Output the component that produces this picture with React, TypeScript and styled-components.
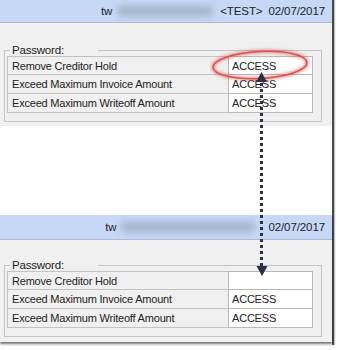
import React from "react";
import styled, { createGlobalStyle } from "styled-components";

const Global = createGlobalStyle`
  html, body { margin: 0; padding: 0; background: #fff; }
  body { font-family: "Liberation Sans", Arial, sans-serif; }
`;

const Page = styled.div`
  position: relative;
  width: 337px;
  height: 350px;
  background: #fff;
  overflow: hidden;
`;

const Frame = styled.div`
  width: 332px;
  height: 345px;
  border-right: 2px solid #4a4a4a;
  box-shadow: 1px 0 1px rgba(0, 0, 0, 0.25);
  display: flex;
  flex-direction: column;
`;

const Panel = styled.section<{ $shadow?: boolean }>`
  background: #f0f0f0;
  display: flex;
  flex-direction: column;
  box-shadow: ${(p) => (p.$shadow ? "0 2px 2px rgba(0,0,0,0.55)" : "none")};
`;

const Gap = styled.div`
  height: 89px;
  background: #fff;
`;

const Header = styled.header<{ $h: number }>`
  height: ${(p) => p.$h}px;
  background: #c6d8f6;
  display: flex;
  align-items: center;
  justify-content: flex-end;
  padding-right: 7px;
  font-size: 11.5px;
  letter-spacing: -0.1px;
  color: #222;
  border-bottom: 1px solid #aebcd2;
`;

const HeaderText = styled.span<{ $ml?: number }>`
  margin-left: ${(p) => p.$ml ?? 0}px;
  white-space: nowrap;
`;

const Blur = styled.span<{ $w: number }>`
  display: inline-block;
  width: ${(p) => p.$w}px;
  height: 12px;
  margin-left: 5px;
  background: #a9b8d0;
  border-radius: 4px;
  filter: blur(3px);
`;

const Body = styled.div<{ $top: number; $bottom: number }>`
  padding: ${(p) => p.$top}px 10px ${(p) => p.$bottom}px 4px;
`;

const Group = styled.fieldset`
  margin: 0;
  padding: 0 8px 8px 2px;
  border: 1px solid #c4c4c4;
  border-radius: 0;
  min-width: 0;
`;

const Legend = styled.legend`
  font-size: 11.5px;
  letter-spacing: -0.2px;
  color: #222;
  padding: 0 34px 0 2px;
  margin-left: 3px;
  line-height: 14px;
`;

const Grid = styled.div`
  display: grid;
  grid-template-columns: 221px 85px;
  grid-auto-rows: 19px;
  margin-top: -1px;
  font-size: 11px;
  letter-spacing: -0.2px;
  color: #222;
`;

const Label = styled.div`
  border: 1px solid #c2c2c2;
  border-right: none;
  border-top: none;
  background: #f0f0f0;
  padding-left: 4px;
  display: flex;
  align-items: center;
  &:nth-child(1) { border-top: 1px solid #c2c2c2; }
`;

const Value = styled.div`
  border: 1px solid #b8b8b8;
  border-top: none;
  background: #fff;
  padding-left: 3px;
  display: flex;
  align-items: center;
  &:nth-child(2) { border-top: 1px solid #b8b8b8; }
`;

const Overlay = styled.svg`
  position: absolute;
  left: 0;
  top: 0;
  pointer-events: none;
`;

type Row = { label: string; value: string };

const PasswordGroup: React.FC<{ rows: Row[] }> = ({ rows }) => (
  <Group>
    <Legend>Password:</Legend>
    <Grid>
      {rows.map((r) => (
        <React.Fragment key={r.label}>
          <Label>{r.label}</Label>
          <Value>{r.value}</Value>
        </React.Fragment>
      ))}
    </Grid>
  </Group>
);

const before: Row[] = [
  { label: "Remove Creditor Hold", value: "ACCESS" },
  { label: "Exceed Maximum Invoice Amount", value: "ACCESS" },
  { label: "Exceed Maximum Writeoff Amount", value: "ACCESS" },
];
const after: Row[] = [
  { label: "Remove Creditor Hold", value: "" },
  { label: "Exceed Maximum Invoice Amount", value: "ACCESS" },
  { label: "Exceed Maximum Writeoff Amount", value: "ACCESS" },
];

export default function App() {
  return (
    <Page>
      <Global />
      <Frame>
        <Panel>
          <Header $h={22}>
            <HeaderText>tw</HeaderText>
            <Blur $w={96} />
            <HeaderText $ml={7}>&lt;TEST&gt;</HeaderText>
            <HeaderText $ml={6}>02/07/2017</HeaderText>
          </Header>
          <Body $top={20} $bottom={4}>
            <PasswordGroup rows={before} />
          </Body>
        </Panel>
        <Gap />
        <Panel $shadow>
          <Header $h={24}>
            <HeaderText>tw</HeaderText>
            <Blur $w={134} />
            <HeaderText $ml={13}>02/07/2017</HeaderText>
          </Header>
          <Body $top={18} $bottom={5}>
            <PasswordGroup rows={after} />
          </Body>
        </Panel>
      </Frame>
      <Overlay width="337" height="350" viewBox="0 0 337 350">
        <defs>
          <filter id="glow" x="-20%" y="-50%" width="140%" height="200%">
            <feGaussianBlur stdDeviation="1.5" />
          </filter>
        </defs>
        <g transform="rotate(-3 260 65)">
          <ellipse cx="260" cy="65" rx="47" ry="13.5" fill="none" stroke="rgba(215,60,55,0.45)" strokeWidth="4" filter="url(#glow)" />
          <ellipse cx="260" cy="65" rx="47" ry="13.5" fill="none" stroke="#d9534f" strokeWidth="1.6" />
        </g>
        <line x1="261.5" y1="83" x2="261.5" y2="266" stroke="#2b3142" strokeWidth="3" strokeDasharray="3 3" />
        <polygon points="261.5,72 256,82 267,82" fill="#2b3142" />
        <polygon points="262,276 256.5,266 267.5,266" fill="#2b3142" />
      </Overlay>
    </Page>
  );
}
